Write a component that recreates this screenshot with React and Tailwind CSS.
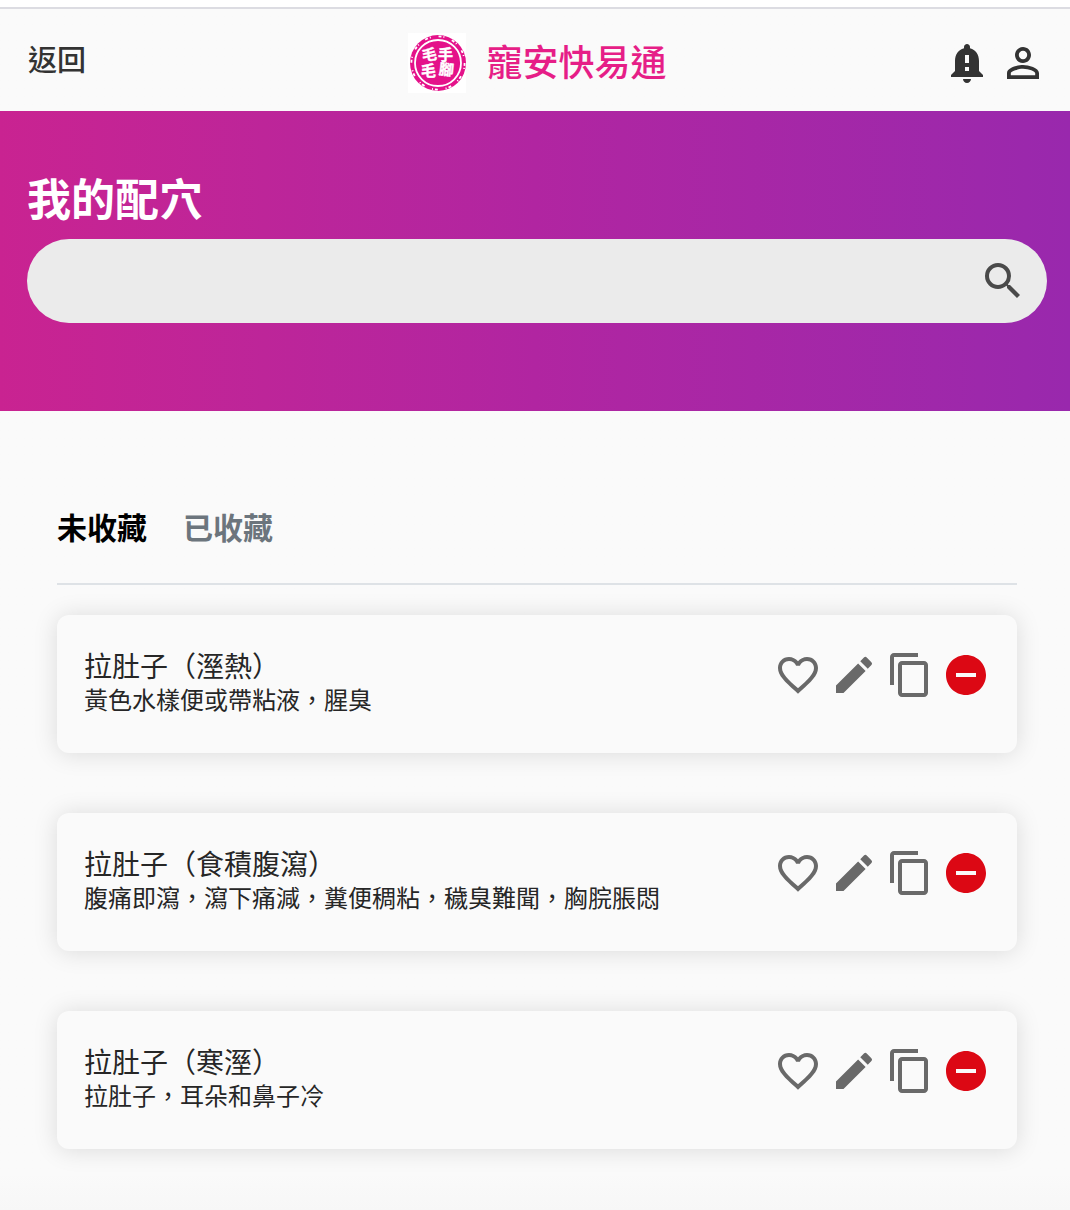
import React from "react";

const PATHS = {
  bell: "M18 16v-5c0-3.07-1.63-5.64-4.5-6.32V4c0-.83-.67-1.5-1.5-1.5s-1.5.67-1.5 1.5v.68C7.64 5.36 6 7.92 6 11v5l-2 2v1h16v-1l-2-2zm-5 0h-2v-2h2v2zm0-4h-2V8h2v4zm-1 10c1.1 0 2-.9 2-2h-4c0 1.1.89 2 2 2z",
  person: "M12 5.9a2.1 2.1 0 1 1 0 4.2 2.1 2.1 0 0 1 0-4.2m0 9c2.97 0 6.1 1.46 6.1 2.1v1.1H5.9V17c0-.64 3.13-2.1 6.1-2.1M12 4C9.79 4 8 5.79 8 8s1.79 4 4 4 4-1.79 4-4-1.79-4-4-4zm0 9c-2.67 0-8 1.34-8 4v3h16v-3c0-2.66-5.33-4-8-4z",
  search: "M15.5 14h-.79l-.28-.27A6.471 6.471 0 0 0 16 9.5 6.5 6.5 0 1 0 9.5 16c1.61 0 3.09-.59 4.23-1.57l.27.28v.79l5 4.99L20.49 19l-4.99-5zm-6 0C7.01 14 5 11.99 5 9.5S7.01 5 9.5 5 14 7.01 14 9.5 11.99 14 9.5 14z",
  heart: "M16.5 3c-1.74 0-3.41.81-4.5 2.09C10.91 3.81 9.24 3 7.5 3 4.42 3 2 5.42 2 8.5c0 3.78 3.4 6.86 8.55 11.54L12 21.35l1.45-1.32C18.6 15.36 22 12.28 22 8.5 22 5.42 19.58 3 16.5 3zm-4.4 15.55l-.1.1-.1-.1C7.14 14.24 4 11.39 4 8.5 4 6.5 5.5 5 7.5 5c1.54 0 3.04.99 3.57 2.36h1.87C13.46 5.99 14.96 5 16.5 5c2 0 3.5 1.5 3.5 3.5 0 2.89-3.14 5.74-7.9 10.05z",
  pencil: "M3 17.25V21h3.75L17.81 9.94l-3.75-3.75L3 17.25zM20.71 7.04a.996.996 0 0 0 0-1.41l-2.34-2.34a.996.996 0 0 0-1.41 0l-1.83 1.83 3.75 3.75 1.83-1.83z",
  copy: "M16 1H4c-1.1 0-2 .9-2 2v14h2V3h12V1zm3 4H8c-1.1 0-2 .9-2 2v14c0 1.1.9 2 2 2h11c1.1 0 2-.9 2-2V7c0-1.1-.9-2-2-2zm0 16H8V7h11v14z",
  remove: "M12 2C6.48 2 2 6.48 2 12s4.48 10 10 10 10-4.48 10-10S17.52 2 12 2zm5 11H7v-2h10v2z",
};

function IconButton({ name, label }) {
  return (
    <button type="button" aria-label={label} className="size-12 shrink-0 cursor-pointer">
      <svg viewBox="0 0 24 24" fill="currentColor" className="size-12" aria-hidden="true">
        <path d={PATHS[name]} />
      </svg>
    </button>
  );
}

function Logo() {
  return (
    <svg viewBox="0 0 58 60" className="h-[60px] w-[58px] bg-white" role="img" aria-label="毛手毛腳">
      <circle cx="30" cy="30" r="28" fill="#e4128a" />
      <circle cx="30" cy="30" r="23" fill="none" stroke="#fff" strokeWidth="1.8" />
      <circle cx="30" cy="30" r="26.6" fill="none" stroke="#fff" strokeWidth="1.8" strokeDasharray="3 2 1 7.9" />
      <g fill="#fff" stroke="#fff" strokeWidth="0.4" fontSize="15" fontWeight="700">
        <text x="14" y="27" transform="rotate(-6 21 22)">毛</text>
        <text x="30" y="27">手</text>
        <text x="13" y="43">毛</text>
        <text x="31" y="42" transform="rotate(6 38 37)">腳</text>
      </g>
    </svg>
  );
}

const RECIPES = [
  { title: "拉肚子（溼熱）", detail: "黃色水樣便或帶粘液，腥臭" },
  { title: "拉肚子（食積腹瀉）", detail: "腹痛即瀉，瀉下痛減，糞便稠粘，穢臭難聞，胸脘脹悶" },
  { title: "拉肚子（寒溼）", detail: "拉肚子，耳朵和鼻子冷" },
];

function RecipeCard({ title, detail }) {
  return (
    <li className="flex items-start justify-between rounded-xl bg-[#fafafa] px-[27px] pt-9 pb-[34px] shadow-[0_1px_24px_rgba(0,0,0,0.13)]">
      <div className="text-[#262626]">
        <h2 className="text-[28px] leading-7">{title}</h2>
        <p className="text-2xl leading-10">{detail}</p>
      </div>
      <div className="flex shrink-0 gap-2 text-[#696969]">
        <IconButton name="heart" label="收藏" />
        <IconButton name="pencil" label="編輯" />
        <IconButton name="copy" label="複製" />
        <span className="flex text-[#dc0814]">
          <IconButton name="remove" label="刪除" />
        </span>
      </div>
    </li>
  );
}

export default function App() {
  return (
    <div
      lang="zh-Hant"
      className="min-h-screen bg-linear-to-b from-[#fafafa] from-97% to-[#f7f7f7] font-['Noto_Sans_CJK_TC',sans-serif]"
    >
      <div className="h-[9px] border-b-2 border-[#dcdce2] bg-white" />
      <header className="grid h-[102px] grid-cols-[1fr_auto_1fr] items-center pr-[23px] pl-7 text-[#333]">
        <a href="#back" className="justify-self-start pb-1 text-[29px] leading-9 font-medium">
          返回
        </a>
        <div className="flex items-center gap-5 pt-1.5">
          <Logo />
          <h1 className="pb-1.5 text-4xl font-medium text-[#e61e87]">寵安快易通</h1>
        </div>
        <div className="flex gap-2 justify-self-end pt-1.5">
          <IconButton name="bell" label="通知" />
          <IconButton name="person" label="會員" />
        </div>
      </header>

      <section className="h-[300px] bg-linear-to-r from-[#c92391] via-[#b125a1] to-[#9928ad] pt-14 pr-[23px] pl-[27px]">
        <h2 className="text-[44px] leading-[60px] font-bold text-white">
          <label htmlFor="search">我的配穴</label>
        </h2>
        <form role="search" className="mt-3 flex h-[84px] items-center rounded-full bg-[#ebebeb] pr-5 pl-8 text-[#4a4a4a]">
          <input id="search" type="text" className="h-full min-w-0 flex-1 bg-transparent text-3xl outline-none" />
          <IconButton name="search" label="搜尋" />
        </form>
      </section>

      <main className="pt-[90px] pr-[53px] pb-14 pl-[57px]">
        <nav className="flex gap-9 border-b-2 border-[#dee2e6] pb-8 text-[30px] leading-[50px] font-bold">
          <button type="button" className="cursor-pointer text-black">未收藏</button>
          <button type="button" className="cursor-pointer text-[#6c757d]">已收藏</button>
        </nav>
        <ul className="mt-[30px] flex flex-col gap-[60px]">
          {RECIPES.map((recipe) => (
            <RecipeCard key={recipe.title} {...recipe} />
          ))}
        </ul>
      </main>
    </div>
  );
}
